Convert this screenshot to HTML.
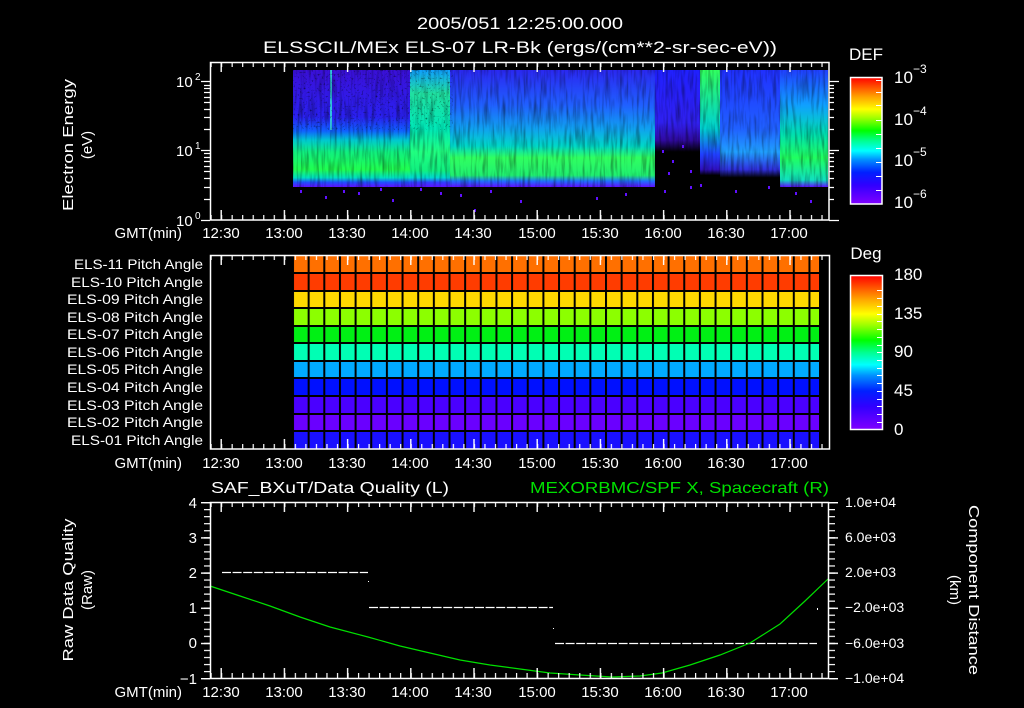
<!DOCTYPE html>
<html><head><meta charset="utf-8"><style>
html,body{margin:0;padding:0;background:#000;width:1024px;height:708px;overflow:hidden}
svg{display:block}
text{font-family:"Liberation Sans",sans-serif;fill:#fff}
</style></head><body>
<svg width="1024" height="708" viewBox="0 0 1024 708" xmlns="http://www.w3.org/2000/svg">
<defs>
<pattern id="tmin" patternUnits="userSpaceOnUse" x="210.5" y="0" width="10.533" height="708"><rect x="0" y="0" width="1.2" height="708" fill="#fff"/></pattern>
<pattern id="tmaj" patternUnits="userSpaceOnUse" x="220.5" y="0" width="63.2" height="708"><rect x="0" y="0" width="1.4" height="708" fill="#fff"/></pattern>
<pattern id="vmin" patternUnits="userSpaceOnUse" x="0" y="502" width="1024" height="7.04"><rect x="0" y="0" width="1024" height="1.2" fill="#fff"/></pattern>
<pattern id="vmaj" patternUnits="userSpaceOnUse" x="0" y="502" width="1024" height="35.2"><rect x="0" y="0" width="1024" height="1.4" fill="#fff"/></pattern>
<pattern id="grid" patternUnits="userSpaceOnUse" x="292" y="0" width="15.65" height="708"><rect x="0" y="0" width="2" height="708" fill="#000"/></pattern>
<linearGradient id="cb" x1="0" y1="1" x2="0" y2="0">
<stop offset="0" stop-color="#8000ff"/><stop offset="0.15" stop-color="#3000ff"/><stop offset="0.25" stop-color="#0020ff"/><stop offset="0.35" stop-color="#0090ff"/><stop offset="0.42" stop-color="#00ffff"/><stop offset="0.5" stop-color="#00ff90"/><stop offset="0.58" stop-color="#00ff00"/><stop offset="0.68" stop-color="#a0ff00"/><stop offset="0.75" stop-color="#ffff00"/><stop offset="0.85" stop-color="#ffa000"/><stop offset="1" stop-color="#ff0000"/></linearGradient>
<linearGradient id="s1" x1="0" y1="0" x2="0" y2="1"><stop offset="0" stop-color="#3a10d8"/><stop offset="0.4" stop-color="#2a20f0"/><stop offset="0.52" stop-color="#1060ff"/><stop offset="0.6" stop-color="#00c8d0"/><stop offset="0.7" stop-color="#10f080"/><stop offset="0.85" stop-color="#20ff50"/><stop offset="0.92" stop-color="#00e0c0"/><stop offset="0.96" stop-color="#2050ff"/><stop offset="1" stop-color="#6010ff"/></linearGradient>
<linearGradient id="s2" x1="0" y1="0" x2="0" y2="1"><stop offset="0" stop-color="#10a0ff"/><stop offset="0.2" stop-color="#20e0a0"/><stop offset="0.5" stop-color="#00e8b8"/><stop offset="0.7" stop-color="#20ff80"/><stop offset="0.86" stop-color="#10f080"/><stop offset="0.92" stop-color="#00d8d0"/><stop offset="0.96" stop-color="#3040ff"/><stop offset="1" stop-color="#6010ff"/></linearGradient>
<linearGradient id="s3" x1="0" y1="0" x2="0" y2="1"><stop offset="0" stop-color="#2a28f0"/><stop offset="0.3" stop-color="#2060ff"/><stop offset="0.5" stop-color="#10a0f0"/><stop offset="0.65" stop-color="#00d8c8"/><stop offset="0.75" stop-color="#30ff60"/><stop offset="0.9" stop-color="#20f070"/><stop offset="0.95" stop-color="#2070ff"/><stop offset="1" stop-color="#6010ff"/></linearGradient>
<linearGradient id="s4" x1="0" y1="0" x2="0" y2="1"><stop offset="0" stop-color="#2020ff"/><stop offset="0.45" stop-color="#3020f0"/><stop offset="0.6" stop-color="#300aa0"/><stop offset="0.7" stop-color="#000"/><stop offset="1" stop-color="#000"/></linearGradient>
<linearGradient id="s5" x1="0" y1="0" x2="0" y2="1"><stop offset="0" stop-color="#30ff60"/><stop offset="0.5" stop-color="#00d0d0"/><stop offset="0.72" stop-color="#2040ff"/><stop offset="0.85" stop-color="#3010c0"/><stop offset="0.9" stop-color="#000"/><stop offset="1" stop-color="#000"/></linearGradient>
<linearGradient id="s6" x1="0" y1="0" x2="0" y2="1"><stop offset="0" stop-color="#2030ff"/><stop offset="0.5" stop-color="#2060ff"/><stop offset="0.7" stop-color="#20a0ff"/><stop offset="0.85" stop-color="#3030e0"/><stop offset="0.92" stop-color="#000"/><stop offset="1" stop-color="#000"/></linearGradient>
<linearGradient id="s7" x1="0" y1="0" x2="0" y2="1"><stop offset="0" stop-color="#2040ff"/><stop offset="0.3" stop-color="#10a0ff"/><stop offset="0.55" stop-color="#00e0b0"/><stop offset="0.75" stop-color="#20ff60"/><stop offset="0.94" stop-color="#10e0c0"/><stop offset="1" stop-color="#6010ff"/></linearGradient>
<filter id="nz" x="0" y="0" width="100%" height="100%"><feTurbulence type="fractalNoise" baseFrequency="0.35 0.04" numOctaves="2" seed="3"/><feColorMatrix type="matrix" values="0 0 0 0 0  0 0 0 0 0  0 0 0 0 0  1.6 0 0 0 -0.7"/></filter>
<filter id="nz2" x="0" y="0" width="100%" height="100%"><feTurbulence type="fractalNoise" baseFrequency="0.5 0.5" numOctaves="1" seed="7"/><feColorMatrix type="matrix" values="0 0 0 0 0  0 0 0 0 0  0 0 0 0 0  3 0 0 0 -1.75"/></filter>
</defs>

<text x="520" y="29" font-size="17" text-anchor="middle" textLength="206" lengthAdjust="spacingAndGlyphs">2005/051 12:25:00.000</text>
<text x="520" y="53" font-size="17" text-anchor="middle" textLength="514" lengthAdjust="spacingAndGlyphs">ELSSCIL/MEx ELS-07 LR-Bk  (ergs/(cm**2-sr-sec-eV))</text>

<!-- TOP PANEL -->
<rect x="293" y="70" width="117" height="117" fill="url(#s1)"/>
<rect x="410" y="70" width="40" height="117" fill="url(#s2)"/>
<rect x="450" y="70" width="205" height="117" fill="url(#s3)"/>
<rect x="655" y="70" width="45" height="117" fill="url(#s4)"/>
<rect x="700" y="70" width="20" height="117" fill="url(#s5)"/>
<rect x="720" y="70" width="60" height="117" fill="url(#s6)"/>
<rect x="780" y="70" width="48" height="117" fill="url(#s7)"/>
<rect x="330" y="70" width="2" height="60" fill="#30c0e0"/>
<rect x="293" y="70" width="535" height="117" filter="url(#nz)" opacity="0.55"/>
<rect x="293" y="70" width="160" height="60" filter="url(#nz2)" opacity="0.7"/>
<g fill="#6010ff">
<rect x="300" y="190" width="2" height="3"/><rect x="325" y="196" width="2" height="3"/><rect x="358" y="192" width="2" height="3"/><rect x="392" y="199" width="2" height="3"/><rect x="420" y="188" width="2" height="3"/><rect x="460" y="194" width="2" height="3"/><rect x="490" y="190" width="2" height="3"/><rect x="520" y="200" width="2" height="3"/><rect x="596" y="197" width="2" height="3"/><rect x="625" y="193" width="2" height="3"/><rect x="664" y="190" width="2" height="3"/><rect x="690" y="186" width="2" height="3"/><rect x="735" y="190" width="2" height="3"/><rect x="768" y="186" width="2" height="3"/><rect x="795" y="192" width="2" height="3"/><rect x="810" y="200" width="2" height="3"/><rect x="474" y="209" width="2" height="3"/><rect x="343" y="190" width="2" height="3"/><rect x="380" y="188" width="2" height="3"/><rect x="440" y="192" width="2" height="3"/><rect x="700" y="184" width="2" height="3"/>
<rect x="662" y="150" width="2" height="3"/><rect x="672" y="160" width="2" height="3"/><rect x="682" y="145" width="2" height="3"/><rect x="690" y="170" width="2" height="3"/><rect x="668" y="172" width="2" height="3"/>
</g>
<rect x="210.5" y="62.5" width="618.5" height="157.5" fill="none" stroke="#fff" stroke-width="1.5"/>
<rect x="210" y="62" width="619" height="5" fill="url(#tmin)"/>
<rect x="210" y="62" width="619" height="10" fill="url(#tmaj)"/>
<rect x="210" y="215" width="619" height="5" fill="url(#tmin)"/>
<rect x="210" y="210" width="619" height="10" fill="url(#tmaj)"/>
<g stroke="#fff" stroke-width="1.2">
<path d="M201 220.5H210M201 150.5H210M201 81.5H210M839 81.5H829M839 150.5H829M839 220.5H829"/>
<path d="M204 199.5H210M204 187.5H210M204 178.5H210M204 171.5H210M204 166.5H210M204 161.5H210M204 157.5H210M204 153.5H210
M204 129.5H210M204 117.5H210M204 109.5H210M204 102.5H210M204 97.5H210M204 92.5H210M204 88.5H210M204 85.5H210
M829 199.5H834M829 187.5H834M829 178.5H834M829 171.5H834M829 166.5H834M829 161.5H834M829 157.5H834M829 153.5H834
M829 129.5H834M829 117.5H834M829 109.5H834M829 102.5H834M829 97.5H834M829 92.5H834M829 88.5H834M829 85.5H834"/>
</g>
<text x="176" y="87" font-size="15">10</text><text x="195" y="80" font-size="10">2</text>
<text x="176" y="156" font-size="15">10</text><text x="195" y="149" font-size="10">1</text>
<text x="176" y="226" font-size="15">10</text><text x="195" y="219" font-size="10">0</text>
<text transform="translate(73,145) rotate(-90)" font-size="15" text-anchor="middle" textLength="132" lengthAdjust="spacingAndGlyphs">Electron Energy</text>
<text transform="translate(92,145) rotate(-90)" font-size="15" text-anchor="middle">(eV)</text>
<g font-size="15" text-anchor="middle">
<text x="182" y="238" text-anchor="end">GMT(min)</text>
<text x="221" y="238">12:30</text><text x="284" y="238">13:00</text><text x="347" y="238">13:30</text><text x="410" y="238">14:00</text><text x="473" y="238">14:30</text><text x="537" y="238">15:00</text><text x="600" y="238">15:30</text><text x="663" y="238">16:00</text><text x="726" y="238">16:30</text><text x="789" y="238">17:00</text>
</g>
<text x="866" y="60" font-size="17" text-anchor="middle">DEF</text>
<rect x="850.5" y="77.5" width="31.5" height="126.5" fill="url(#cb)" stroke="#fff" stroke-width="1.5"/>
<g stroke="#fff" stroke-width="1"><path d="M876 80.5H882M876 92.5H882M876 105.5H882M876 120.5H882M876 134.5H882M876 148.5H882M876 162.5H882M876 176.5H882M876 190.5H882"/></g>
<g font-size="17"><text x="894" y="83">10</text><text x="913" y="73" font-size="12">−3</text>
<text x="894" y="125">10</text><text x="913" y="115" font-size="12">−4</text>
<text x="894" y="166">10</text><text x="913" y="156" font-size="12">−5</text>
<text x="894" y="208">10</text><text x="913" y="198" font-size="12">−6</text></g>

<!-- MIDDLE PANEL -->
<g>
<rect x="293" y="256" width="526" height="18" fill="#ff7000"/>
<rect x="293" y="273" width="526" height="18" fill="#ff3c00"/>
<rect x="293" y="291" width="526" height="18" fill="#ffd800"/>
<rect x="293" y="308" width="526" height="18" fill="#8cff00"/>
<rect x="293" y="326" width="526" height="18" fill="#00f014"/>
<rect x="293" y="343" width="526" height="18" fill="#00ffb4"/>
<rect x="293" y="361" width="526" height="18" fill="#00aaff"/>
<rect x="293" y="378" width="526" height="18" fill="#0010ff"/>
<rect x="293" y="396" width="526" height="18" fill="#4a00ff"/>
<rect x="293" y="414" width="526" height="18" fill="#6a00ff"/>
<rect x="293" y="431" width="526" height="18" fill="#1a10ff"/>
<rect x="293" y="256" width="526" height="193" fill="url(#grid)"/>
<g fill="#000"><rect x="293" y="272" width="526" height="2"/><rect x="293" y="290" width="526" height="2"/><rect x="293" y="307" width="526" height="2"/><rect x="293" y="325" width="526" height="2"/><rect x="293" y="342" width="526" height="2"/><rect x="293" y="360" width="526" height="2"/><rect x="293" y="377" width="526" height="2"/><rect x="293" y="395" width="526" height="2"/><rect x="293" y="413" width="526" height="2"/><rect x="293" y="430" width="526" height="2"/></g>
</g>
<rect x="210.5" y="255.5" width="619" height="193.5" fill="none" stroke="#fff" stroke-width="1.5"/>
<rect x="210" y="255" width="619" height="5" fill="url(#tmin)"/>
<rect x="210" y="255" width="619" height="10" fill="url(#tmaj)"/>
<rect x="210" y="444" width="619" height="5" fill="url(#tmin)"/>
<rect x="210" y="439" width="619" height="10" fill="url(#tmaj)"/>
<g font-size="14" text-anchor="end">
<text x="203" y="269" textLength="129" lengthAdjust="spacingAndGlyphs">ELS-11 Pitch Angle</text>
<text x="203" y="287" textLength="132" lengthAdjust="spacingAndGlyphs">ELS-10 Pitch Angle</text>
<text x="203" y="304" textLength="136" lengthAdjust="spacingAndGlyphs">ELS-09 Pitch Angle</text>
<text x="203" y="322" textLength="136" lengthAdjust="spacingAndGlyphs">ELS-08 Pitch Angle</text>
<text x="203" y="339" textLength="136" lengthAdjust="spacingAndGlyphs">ELS-07 Pitch Angle</text>
<text x="203" y="357" textLength="136" lengthAdjust="spacingAndGlyphs">ELS-06 Pitch Angle</text>
<text x="203" y="374" textLength="136" lengthAdjust="spacingAndGlyphs">ELS-05 Pitch Angle</text>
<text x="203" y="392" textLength="136" lengthAdjust="spacingAndGlyphs">ELS-04 Pitch Angle</text>
<text x="203" y="410" textLength="136" lengthAdjust="spacingAndGlyphs">ELS-03 Pitch Angle</text>
<text x="203" y="427" textLength="136" lengthAdjust="spacingAndGlyphs">ELS-02 Pitch Angle</text>
<text x="203" y="445" textLength="132" lengthAdjust="spacingAndGlyphs">ELS-01 Pitch Angle</text>
</g>
<g font-size="15" text-anchor="middle">
<text x="182" y="468" text-anchor="end">GMT(min)</text>
<text x="221" y="468">12:30</text><text x="284" y="468">13:00</text><text x="347" y="468">13:30</text><text x="410" y="468">14:00</text><text x="473" y="468">14:30</text><text x="537" y="468">15:00</text><text x="600" y="468">15:30</text><text x="663" y="468">16:00</text><text x="726" y="468">16:30</text><text x="789" y="468">17:00</text>
</g>
<text x="866" y="259" font-size="17" text-anchor="middle">Deg</text>
<rect x="850.5" y="275.5" width="32" height="154" fill="url(#cb)" stroke="#fff" stroke-width="1.5"/>
<g stroke="#fff" stroke-width="1"><path d="M877 290.5H883M877 298.5H883M877 306.5H883M877 314.5H883M877 321.5H883M877 329.5H883M877 337.5H883M877 345.5H883M877 352.5H883M877 360.5H883M877 368.5H883M877 375.5H883M877 383.5H883M877 391.5H883M877 399.5H883M877 406.5H883M877 414.5H883M877 422.5H883"/></g>
<g font-size="17"><text x="894" y="280">180</text><text x="894" y="319">135</text><text x="894" y="357">90</text><text x="894" y="396">45</text><text x="894" y="435">0</text></g>

<!-- BOTTOM PANEL -->
<text x="211" y="493" font-size="16" textLength="238" lengthAdjust="spacingAndGlyphs">SAF_BXuT/Data Quality (L)</text>
<text x="530" y="493" font-size="16" style="fill:#00e000" textLength="299" lengthAdjust="spacingAndGlyphs">MEXORBMC/SPF X, Spacecraft (R)</text>
<g stroke="#fff" stroke-width="1.3" stroke-dasharray="9 1.6">
<path d="M222 572.5H368M369 607.5H553M555 643.5H817"/>
</g>
<g fill="#fff"><rect x="368" y="581" width="1" height="1"/><rect x="553" y="628" width="1" height="1"/><rect x="817" y="608" width="1" height="2"/></g>
<path d="M210 586L240 596L270 606L300 617L330 627L368 637L400 646L430 653L460 660L490 665L520 669L550 673L580 675L612 677L640 676L662 673L690 665L720 655L750 643L780 624L805 601L828 579" fill="none" stroke="#00e000" stroke-width="1.2"/>
<rect x="210.5" y="502.5" width="618" height="176" fill="none" stroke="#fff" stroke-width="1.5"/>
<rect x="210" y="502" width="619" height="5" fill="url(#tmin)"/>
<rect x="210" y="502" width="619" height="10" fill="url(#tmaj)"/>
<rect x="210" y="673" width="619" height="5" fill="url(#tmin)"/>
<rect x="210" y="668" width="619" height="10" fill="url(#tmaj)"/>
<rect x="204" y="502" width="6" height="178" fill="url(#vmin)"/>
<rect x="201" y="502" width="9" height="178" fill="url(#vmaj)"/>
<rect x="829" y="502" width="6" height="178" fill="url(#vmin)"/>
<rect x="829" y="502" width="9" height="178" fill="url(#vmaj)"/>
<g font-size="15" text-anchor="end">
<text x="197" y="508">4</text><text x="197" y="543">3</text><text x="197" y="578">2</text><text x="197" y="613">1</text><text x="197" y="648">0</text><text x="197" y="684">−1</text>
</g>
<g font-size="14">
<text x="845" y="507">1.0e+04</text><text x="845" y="542">6.0e+03</text><text x="845" y="577">2.0e+03</text><text x="845" y="612">−2.0e+03</text><text x="845" y="648">−6.0e+03</text><text x="845" y="683">−1.0e+04</text>
</g>
<text transform="translate(73,590) rotate(-90)" font-size="15" text-anchor="middle" textLength="143" lengthAdjust="spacingAndGlyphs">Raw Data Quality</text>
<text transform="translate(92,590) rotate(-90)" font-size="15" text-anchor="middle">(Raw)</text>
<text transform="translate(969,590) rotate(90)" font-size="15" text-anchor="middle" textLength="170" lengthAdjust="spacingAndGlyphs">Component Distance</text>
<text transform="translate(950,590) rotate(90)" font-size="15" text-anchor="middle">(km)</text>
<g font-size="15" text-anchor="middle">
<text x="182" y="697" text-anchor="end">GMT(min)</text>
<text x="221" y="697">12:30</text><text x="284" y="697">13:00</text><text x="347" y="697">13:30</text><text x="410" y="697">14:00</text><text x="473" y="697">14:30</text><text x="537" y="697">15:00</text><text x="600" y="697">15:30</text><text x="663" y="697">16:00</text><text x="726" y="697">16:30</text><text x="789" y="697">17:00</text>
</g>
</svg>
</body></html>
